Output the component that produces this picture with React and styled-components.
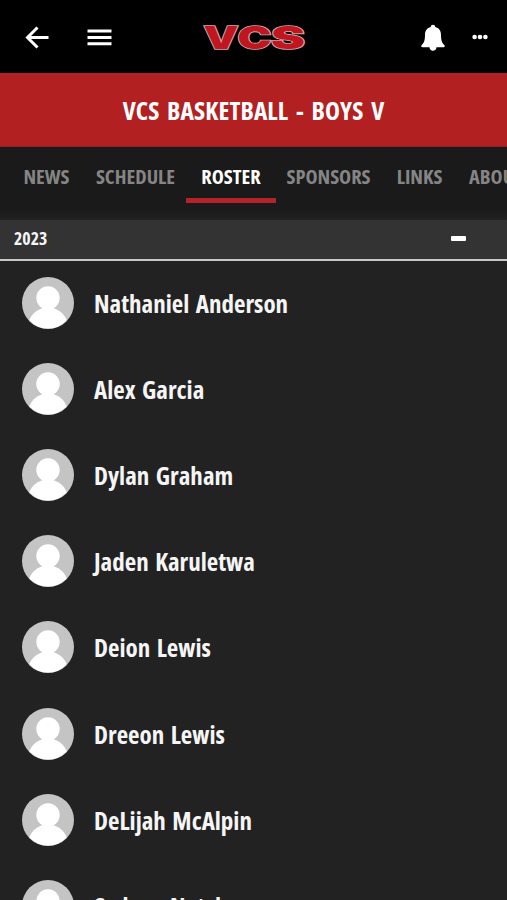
import React from "react";
import styled, { createGlobalStyle } from "styled-components";

const GlobalStyle = createGlobalStyle`
    * {
        box-sizing: border-box;
    }

    body {
        margin: 0;
        background: #222222;
        font-family: "Open Sans", "Noto Sans", sans-serif;
        font-weight: 700;
        font-stretch: 75%;
    }
`

const Screen = styled.div`
    width: 507px;
    height: 900px;
    overflow: hidden;
    display: flex;
    flex-direction: column;
    background: #222222;
    color: #f5f5f5;
`

const TopBar = styled.header`
    flex: none;
    height: 73px;
    padding: 2px 19px 0 25px;
    display: grid;
    grid-template-columns: 1fr auto 1fr;
    align-items: center;
    background: #000000;
`

const BarGroup = styled.div`
    display: flex;
    align-items: center;
    justify-content: ${props => props.$end ? "flex-end" : "flex-start"};
    gap: ${props => props.$gap}px;
`

const Icon = styled.svg`
    display: block;
    flex: none;
    overflow: visible;
`

const TitleBar = styled.div`
    flex: none;
    height: 74px;
    display: flex;
    align-items: center;
    justify-content: center;
    border-bottom: 1px solid #8e2024;
    background: #b32022;
    color: #ffffff;
    font-size: 25.4px;
    letter-spacing: 0.12px;
    word-spacing: 3px;
    white-space: nowrap;
`

const Tabs = styled.nav`
    flex: none;
    height: 73px;
    padding-left: 8px;
    display: flex;
    align-items: flex-start;
    background: linear-gradient(#1a1a1a 62px, #222222 73px);
`

const Tab = styled.div`
    flex: none;
    width: ${props => props.$width}px;
    height: 56px;
    display: flex;
    align-items: center;
    justify-content: center;
    padding-top: 7px;
    border-bottom: 5px solid ${props => props.$active ? "#b3232a" : "transparent"};
    color: ${props => props.$active ? "#ffffff" : "#858585"};
    font-size: 20.4px;
    white-space: nowrap;
`

const SeasonHeader = styled.div`
    flex: none;
    height: 41px;
    padding: 0 41px 3px 14px;
    display: flex;
    align-items: center;
    justify-content: space-between;
    border-bottom: 2px solid #c8c8c8;
    background: #333333;
    font-size: 17.8px;
`

const Minus = styled.span`
    width: 15px;
    height: 5px;
    border-radius: 1px;
    background: #ffffff;
`

const PlayerRow = styled.div`
    flex: none;
    height: 86.1px;
    padding: 0 0 2px 21.5px;
    display: flex;
    align-items: center;
    gap: 20.5px;
`

const PlayerName = styled.span`
    font-size: 25px;
    word-spacing: 2px;
    white-space: nowrap;
`

const tabs = [
    { label: "NEWS", width: 77 },
    { label: "SCHEDULE", width: 101 },
    { label: "ROSTER", width: 90, active: true },
    { label: "SPONSORS", width: 105 },
    { label: "LINKS", width: 77 },
    { label: "ABOUT", width: 76 },
];

const players = [
    "Nathaniel Anderson",
    "Alex Garcia",
    "Dylan Graham",
    "Jaden Karuletwa",
    "Deion Lewis",
    "Dreeon Lewis",
    "DeLijah McAlpin",
    "Sydney Natcher",
];

const LogoText = styled.text`
    font-family: Inter, "DejaVu Sans", sans-serif;
    font-size: 31px;
    font-weight: 900;
    font-stretch: 100%;
    fill: #c1151f;
    stroke: #cfa9a9;
    stroke-width: 1.6px;
    paint-order: stroke;
`

const Logo = () => (
    <Icon width="104" height="36" viewBox="0 0 104 36">
        <LogoText x="-1.5" y="28.5" textLength="35" lengthAdjust="spacingAndGlyphs">V</LogoText>
        <LogoText x="32.5" y="28.5" textLength="34" lengthAdjust="spacingAndGlyphs">C</LogoText>
        <LogoText x="66" y="28.5" textLength="34" lengthAdjust="spacingAndGlyphs">S</LogoText>
    </Icon>
)

const Avatar = () => (
    <Icon width="52" height="52" viewBox="0 0 52 52">
        <clipPath id="face">
            <circle cx="26" cy="26" r="25.6" />
        </clipPath>
        <circle cx="26" cy="26" r="26" fill="#c4c4c4" />
        <g clipPath="url(#face)" fill="#ffffff">
            <circle cx="26" cy="21" r="11.7" />
            <path d="M19 28h14l-1.500 5h-11z" />
            <ellipse cx="26" cy="50" rx="20" ry="19.500" />
        </g>
    </Icon>
)

const App = () => (
    <Screen>
        <GlobalStyle />
        <TopBar>
            <BarGroup $gap={38}>
                <Icon width="24" height="24" viewBox="0 0 24 24" fill="none" stroke="#fff" strokeWidth="3">
                    <path d="M23.5 11.500H3M12.5 1.500L2.5 11.500L12.5 21.500" />
                </Icon>
                <Icon width="25" height="17" viewBox="0 0 25 17" fill="#fff">
                    <path d="M0.5 0.500h24v3h-24zM0.5 7h24v3h-24zM0.5 13.300h24v3h-24z" />
                </Icon>
            </BarGroup>
            <Logo />
            <BarGroup $end $gap={27}>
                <Icon width="24" height="28" viewBox="0 0 24 28" fill="#fff">
                    <path d="M12 .8c1.300 0 2.200.9 2.200 2.200C18 4 20 6.800 20 10.800c0 6 1 8.200 3.300 10.200.9.900.5 2.300-.8 2.300H1.500C.2 23.300-.2 21.900.7 21 3 19 4 16.800 4 10.800c0-4 2-6.800 5.800-7.800C9.800 1.700 10.700.8 12 .8zM8.500 23h7c0 2.600-1.700 3.800-3.500 3.800s-3.500-1.200-3.500-3.800z" />
                </Icon>
                <Icon width="16" height="6" viewBox="0 0 16 6" fill="#fff">
                    <circle cx="2.600" cy="2" r="2.300" />
                    <circle cx="8" cy="2" r="2.300" />
                    <circle cx="13.400" cy="2" r="2.300" />
                </Icon>
            </BarGroup>
        </TopBar>
        <TitleBar>VCS BASKETBALL - BOYS V</TitleBar>
        <Tabs>
            {tabs.map(tab => (
                <Tab key={tab.label} $width={tab.width} $active={tab.active}>{tab.label}</Tab>
            ))}
        </Tabs>
        <SeasonHeader>
            2023
            <Minus />
        </SeasonHeader>
        {players.map(name => (
            <PlayerRow key={name}>
                <Avatar />
                <PlayerName>{name}</PlayerName>
            </PlayerRow>
        ))}
    </Screen>
)

export default App;
